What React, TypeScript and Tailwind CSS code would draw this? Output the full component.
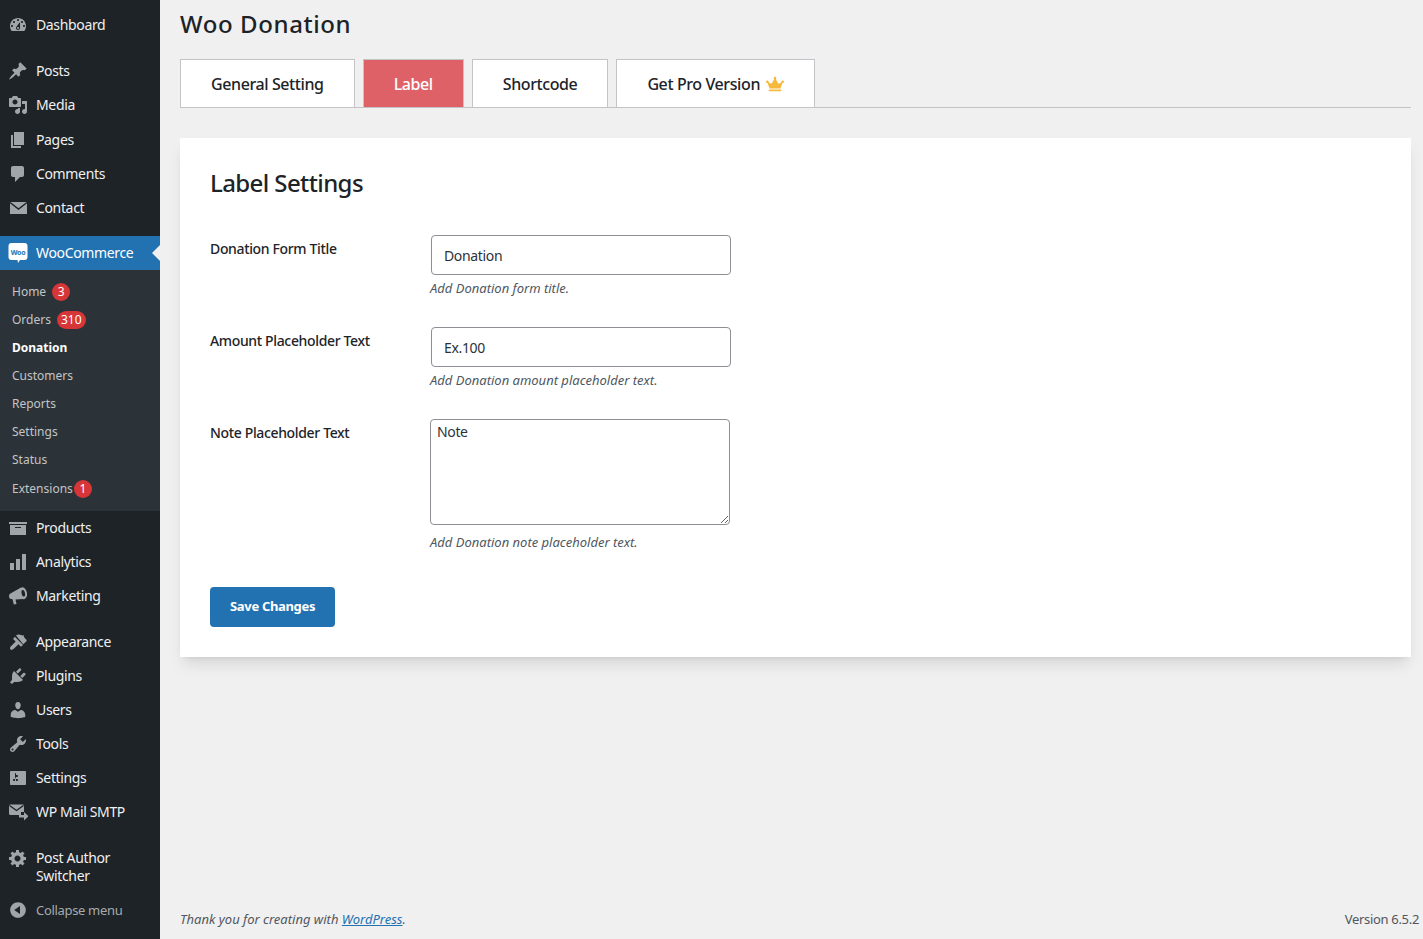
import type { ReactNode } from 'react';
import { FaCrown } from 'react-icons/fa';

const icons: Record<string, ReactNode> = {
  dashboard: (
    <path
      fillRule="evenodd"
      d="M3.76 16h12.48c1.1-1.37 1.76-3.11 1.76-5 0-4.42-3.58-8-8-8s-8 3.58-8 8c0 1.89.66 3.63 1.76 5zM10 4c.55 0 1 .45 1 1s-.45 1-1 1-1-.45-1-1 .45-1 1-1zM6 6c.55 0 1 .45 1 1s-.45 1-1 1-1-.45-1-1 .45-1 1-1zm8 0c.55 0 1 .45 1 1s-.45 1-1 1-1-.45-1-1 .45-1 1-1zm-5.37 5.55L12 7v6c0 1.1-.9 2-2 2s-2-.9-2-2c0-.57.24-1.08.63-1.45zM4 10c.55 0 1 .45 1 1s-.45 1-1 1-1-.45-1-1 .45-1 1-1zm12 0c.55 0 1 .45 1 1s-.45 1-1 1-1-.45-1-1 .45-1 1-1zm-5 3c0-.55-.45-1-1-1s-1 .45-1 1 .45 1 1 1 1-.45 1-1z"
    />
  ),
  posts: (
    <path d="M10.44 3.02l1.82-1.82 6.36 6.35-1.83 1.82c-1.05-.68-2.48-.57-3.41.36l-.75.75c-.92.93-1.04 2.35-.35 3.41l-1.83 1.82-2.41-2.41-2.8 2.79c-.42.42-3.38 2.71-3.8 2.29s1.86-3.39 2.28-3.81l2.79-2.79L4.1 9.36l1.83-1.82c1.05.69 2.48.57 3.4-.36l.75-.75c.93-.92 1.05-2.35.36-3.41z" />
  ),
  media: (
    <path
      fillRule="evenodd"
      d="M13 11V4c0-.55-.45-1-1-1h-1.67L9 1H5L3.67 3H2c-.55 0-1 .45-1 1v7c0 .55.45 1 1 1h10c.55 0 1-.45 1-1zM7 4.500c1.380 0 2.500 1.120 2.500 2.500S8.380 9.500 7 9.500 4.500 8.380 4.500 7 5.620 4.500 7 4.500zM14 6h5v10.500c0 1.380-1.120 2.500-2.500 2.500S14 17.880 14 16.500s1.120-2.500 2.500-2.500c.17 0 .34.02.5.05V9h-3V6zm-4 8.050V13h2v3.500c0 1.380-1.120 2.500-2.500 2.500S7 17.880 7 16.500 8.120 14 9.500 14c.17 0 .34.02.5.05z"
    />
  ),
  pages: <path d="M6 15V2h10v13H6zm-1 1h8v2H3V5h2v11z" />,
  comments: (
    <path d="M5 2h9c1.100 0 2 .9 2 2v7c0 1.100-.9 2-2 2h-2l-5 5v-5H5c-1.100 0-2-.9-2-2V4c0-1.100.9-2 2-2z" />
  ),
  contact: (
    <>
      <rect x="2" y="4" width="17" height="12" />
      <path d="M2 4.500l8.500 6.500 8.500-6.500" fill="none" stroke="#1d2327" strokeWidth="1.400" />
    </>
  ),
  products: <path fillRule="evenodd" d="M19 4v2H1V4h18zM2 7h16v10H2V7zm11 3V9H7v1h6z" />,
  analytics: (
    <>
      <rect x="2" y="11" width="4" height="7" />
      <rect x="8" y="7" width="4" height="11" />
      <rect x="14" y="2" width="4" height="16" />
    </>
  ),
  marketing: (
    <>
      <path d="M13 1.500L2 7.800Q1 8.400 1 10.300T2 12.800L4.500 13.300 5.800 18.500 8.500 18 7.500 13.500 15 13z" />
      <ellipse cx="15" cy="7.300" rx="4" ry="6" transform="rotate(-12 15 7.300)" />
      <ellipse cx="15.300" cy="7.300" rx="1.700" ry="3.300" transform="rotate(-12 15.300 7.300)" fill="#1d2327" />
    </>
  ),
  appearance: (
    <path d="M8 3.500c1.500-1.300 3.500-1.300 5-.5 1 .5 1.800.6 3 .2-.3 1.100 0 1.900.7 2.700l1.500 1.600c.6.6.6 1.400 0 2l-3 2.800zM6.800 4.800l8.200 8.300-2 1.700-2.500-2.500-5 4.800c-.8.8-2.300 1-3 .3s-.6-2.200.2-3l5-4.800-2.600-2.600z" />
  ),
  plugins: (
    <path d="M13.110 4.360L9.870 7.600 8 5.730l3.240-3.240c.35-.34 1.050-.2 1.560.32.52.51.66 1.210.31 1.550zm-8 1.770l.91-1.120 9.010 9.010-1.190.84c-.71.71-2.630 1.160-3.820 1.160H6.140L4.900 17.260c-.59.59-1.540.59-2.120 0-.59-.58-.59-1.530 0-2.120l1.240-1.240v-3.880c0-1.130.4-3.190 1.090-3.890zm7.260 3.970l3.240-3.240c.34-.35 1.040-.21 1.550.31.52.51.66 1.210.31 1.550l-3.240 3.250z" />
  ),
  users: (
    <path d="M10 9.250c-2.270 0-2.730-3.440-2.730-3.440C7 4.020 7.820 2 9.970 2c2.160 0 2.980 2.020 2.710 3.810 0 0-.41 3.440-2.680 3.440zm0 2.570L12.720 10c2.390 0 4.520 2.330 4.520 4.530v2.490s-3.650 1.130-7.240 1.130c-3.650 0-7.240-1.130-7.240-1.130v-2.490c0-2.250 1.940-4.480 4.470-4.480z" />
  ),
  tools: (
    <path
      fillRule="evenodd"
      d="M16.680 9.770c-1.340 1.340-3.300 1.670-4.950.99l-5.410 6.520c-.99.99-2.590.99-3.580 0s-.99-2.590 0-3.570l6.520-5.420c-.68-1.650-.35-3.610.99-4.950 1.280-1.280 3.120-1.620 4.720-1.060l-2.890 2.890 2.820 2.820 2.860-2.870c.53 1.580.18 3.390-1.080 4.650zM3.810 16.210c.4.39 1.040.39 1.430 0 .4-.4.4-1.040 0-1.430-.39-.4-1.030-.4-1.430 0-.39.39-.39 1.030 0 1.430z"
    />
  ),
  settings: (
    <path
      fillRule="evenodd"
      d="M18 16V4c0-.55-.45-1-1-1H3c-.55 0-1 .45-1 1v12c0 .55.45 1 1 1h14c.55 0 1-.45 1-1zM8 11h1c.55 0 1 .45 1 1s-.45 1-1 1H8v1.500c0 .28-.22.5-.5.5s-.5-.22-.5-.5V13H6c-.55 0-1-.45-1-1s.45-1 1-1h1V5.500c0-.28.22-.5.5-.5s.5.22.5.5V7h1c.55 0 1 .45 1 1s-.45 1-1 1h-1v5.500c0 .28-.22.5-.5.5s-.5-.22-.5-.5V9z"
    />
  ),
  smtp: (
    <>
      <path d="M1 4c0-.8.6-1.500 1.500-1.500h12c.9 0 1.500.7 1.500 1.500v6h-3v3H2.500C1.600 13 1 12.300 1 11.500z" />
      <path d="M1.500 3.500l7 5 7-5" fill="none" stroke="#1d2327" strokeWidth="1.400" />
      <path d="M11 13h5v-3l4.500 4.300-4.500 4.200v-3h-5z" />
    </>
  ),
  gear: (
    <path
      fillRule="evenodd"
      d="M18 12h-2.180c-.17.7-.44 1.350-.81 1.930l1.540 1.540-2.100 2.100-1.540-1.540c-.58.36-1.230.63-1.910.79V19H8v-2.180c-.68-.16-1.330-.43-1.910-.79l-1.540 1.540-2.120-2.120 1.540-1.540c-.36-.58-.63-1.230-.79-1.910H1V9.030h2.170c.16-.7.44-1.350.8-1.940L2.430 5.550l2.100-2.100 1.540 1.540c.58-.37 1.240-.64 1.930-.81V2h3v2.180c.68.16 1.330.43 1.910.79l1.540-1.540 2.120 2.120-1.540 1.540c.36.59.64 1.240.8 1.940H18V12zm-8.500 1.500c1.660 0 3-1.340 3-3s-1.340-3-3-3-3 1.340-3 3 1.340 3 3 3z"
    />
  ),
  collapse: (
    <path
      fillRule="evenodd"
      d="M10 2.160c4.330 0 7.840 3.510 7.840 7.840s-3.510 7.840-7.840 7.840S2.160 14.330 2.160 10 5.710 2.160 10 2.160zm2 11.720V6.120L6.180 9.970z"
    />
  ),
};

function MenuIcon({ name }: { name: string }) {
  return (
    <svg viewBox="0 0 20 20" fill="currentColor" className="-my-px size-5 shrink-0 text-[#a0a5aa]">
      {icons[name]}
    </svg>
  );
}

function WooIcon() {
  return (
    <svg viewBox="0 0 20 20" className="-my-px size-5 shrink-0">
      <path
        fill="#fff"
        d="M3.500 0h13a3 3 0 0 1 3 3v11a3 3 0 0 1-3 3H12l-2 3-.5-3h-6a3 3 0 0 1-3-3V3a3 3 0 0 1 3-3z"
      />
      <text
        x="10"
        y="11.500"
        textAnchor="middle"
        fontSize="7"
        fontWeight="700"
        fontFamily="'Noto Sans', sans-serif"
        fill="#2271b1"
      >
        Woo
      </text>
    </svg>
  );
}

function MenuItem({ icon, label, className }: { icon: string; label: string; className?: string }) {
  return (
    <a className={`flex items-center gap-2 py-2 pl-2 text-sm leading-4.5 tracking-tight text-[#f0f0f1] ${className ?? ''}`}>
      <MenuIcon name={icon} />
      <span>{label}</span>
    </a>
  );
}

function Badge({ children }: { children: ReactNode }) {
  return (
    <span className="flex h-4.5 min-w-4.5 items-center justify-center rounded-full bg-[#d63638] px-1 text-xs leading-none text-white">
      {children}
    </span>
  );
}

function SubItem({ label, badge, active, className }: { label: string; badge?: string; active?: boolean; className?: string }) {
  return (
    <a
      className={`flex h-7 items-center pl-3 text-xs ${active ? 'font-bold text-white' : 'text-[#c3c4c7]'} ${className ?? ''}`}
    >
      <span>{label}</span>
      {badge && (
        <span className={label === 'Extensions' ? 'ml-px' : 'ml-1.5'}>
          <Badge>{badge}</Badge>
        </span>
      )}
    </a>
  );
}

function Sidebar() {
  return (
    <aside className="flex w-40 shrink-0 flex-col bg-[#1d2327] pt-2">
      <MenuItem icon="dashboard" label="Dashboard" />
      <div className="mt-3 flex flex-col pb-px">
        <MenuItem icon="posts" label="Posts" />
        <MenuItem icon="media" label="Media" />
        <MenuItem icon="pages" label="Pages" className="mt-px" />
        <MenuItem icon="comments" label="Comments" />
        <MenuItem icon="contact" label="Contact" />
      </div>
      <div className="relative mt-2.5 flex items-center gap-2 bg-[#2271b1] py-2 pl-2 text-sm leading-4.5 tracking-tight text-white">
        <WooIcon />
        <span>WooCommerce</span>
        <span className="absolute top-1/2 right-0 -translate-y-1/2 border-y-8 border-r-8 border-y-transparent border-r-[#f0f0f1]" />
      </div>
      <div className="flex flex-col bg-[#2c3338] py-2">
        <SubItem label="Home" badge="3" />
        <SubItem label="Orders" badge="310" />
        <SubItem label="Donation" active />
        <SubItem label="Customers" />
        <SubItem label="Reports" />
        <SubItem label="Settings" />
        <SubItem label="Status" />
        <SubItem label="Extensions" badge="1" className="mt-px" />
      </div>
      <MenuItem icon="products" label="Products" />
      <MenuItem icon="analytics" label="Analytics" />
      <MenuItem icon="marketing" label="Marketing" />
      <div className="mt-3 flex flex-col">
        <MenuItem icon="appearance" label="Appearance" />
        <MenuItem icon="plugins" label="Plugins" />
        <MenuItem icon="users" label="Users" />
        <MenuItem icon="tools" label="Tools" />
        <MenuItem icon="settings" label="Settings" />
        <MenuItem icon="smtp" label="WP Mail SMTP" />
      </div>
      <a className="mt-3 flex items-start gap-2 py-2 pl-2 text-sm leading-4.5 tracking-tight text-[#f0f0f1]">
        <MenuIcon name="gear" />
        <span>
          Post Author
          <br />
          Switcher
        </span>
      </a>
      <a className="flex items-center gap-2 py-2 pl-2 text-[13px] leading-4.5 tracking-tight text-[#a7aaad]">
        <MenuIcon name="collapse" />
        <span>Collapse menu</span>
      </a>
    </aside>
  );
}

function Tab({ children, active }: { children: ReactNode; active?: boolean }) {
  return (
    <a
      className={`flex h-12 items-center gap-1.5 border-x border-t border-[#c3c4c7] px-7.5 text-base font-medium tracking-tight ${
        active ? 'bg-[#df6168] text-white' : 'bg-white text-[#1d2327]'
      }`}
    >
      {children}
    </a>
  );
}

function Field({ label, hint, children, hintClass }: { label: string; hint: string; children: ReactNode; hintClass?: string }) {
  return (
    <div className="flex">
      <label className="w-55 pt-1 text-sm leading-5 font-medium tracking-tight text-[#1d2327]">{label}</label>
      <div className="flex flex-col">
        {children}
        <p className={`text-[13px] leading-4.5 text-[#50575e] italic ${hintClass ?? 'mt-1'}`}>{hint}</p>
      </div>
    </div>
  );
}

export default function App() {
  return (
    <div className="flex h-screen font-['Noto_Sans','Open_Sans',sans-serif]">
      <Sidebar />
      <main className="flex min-w-0 flex-1 flex-col bg-[#f0f0f1] pt-2 pr-3 pl-5">
        <h1 className="mb-5 text-2xl leading-8 font-medium tracking-wide text-[#1d2327]">Woo Donation</h1>
        <div className="-mt-px flex gap-2 border-b border-[#c3c4c7]">
          <Tab>General Setting</Tab>
          <Tab active>Label</Tab>
          <Tab>Shortcode</Tab>
          <Tab>
            Get Pro Version
            <FaCrown className="size-4.5 text-[#f6b93b]" />
          </Tab>
        </div>
        <section className="mt-7.5 bg-white p-7.5 shadow-lg">
          <h2 className="-mt-px mb-9 text-2xl leading-8 font-medium tracking-tight text-[#1d2327]">Label Settings</h2>
          <div className="flex flex-col gap-7.5">
            <Field label="Donation Form Title" hint="Add Donation form title.">
              <input
                defaultValue="Donation"
                className="ml-px h-10 w-75 rounded border border-[#8c8f94] bg-white px-3 text-sm tracking-tight text-[#2c3338] outline-none"
              />
            </Field>
            <Field label="Amount Placeholder Text" hint="Add Donation amount placeholder text.">
              <input
                defaultValue="Ex.100"
                className="ml-px h-10 w-75 rounded border border-[#8c8f94] bg-white px-3 text-sm tracking-tight text-[#2c3338] outline-none"
              />
            </Field>
            <Field label="Note Placeholder Text" hint="Add Donation note placeholder text." hintClass="mt-2">
              <textarea
                rows={5}
                defaultValue="Note"
                className="w-75 rounded border border-[#8c8f94] bg-white px-1.5 py-0.5 text-sm leading-5 tracking-tight text-[#2c3338] outline-none"
              />
            </Field>
          </div>
          <button className="mt-9 h-10 rounded-sm bg-[#2271b1] px-5 text-[13px] font-bold tracking-tight text-white">
            Save Changes
          </button>
        </section>
        <footer className="-mr-2 mt-auto flex justify-between pb-2.5 text-[13px] leading-5 text-[#50575e]">
          <p className="italic">
            Thank you for creating with <a className="text-[#2271b1] underline">WordPress</a>.
          </p>
          <p className="tracking-tight">Version 6.5.2</p>
        </footer>
      </main>
    </div>
  );
}
